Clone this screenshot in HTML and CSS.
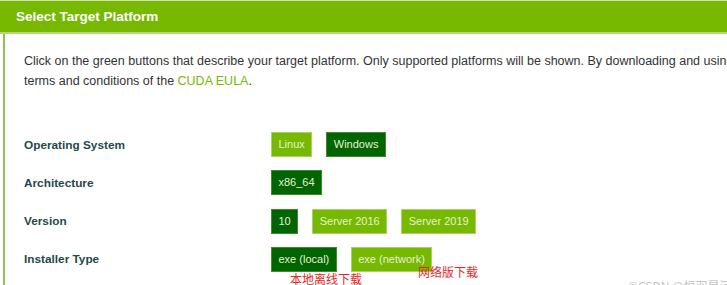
FILE: index.html
```html
<!DOCTYPE html>
<html>
<head>
<meta charset="utf-8">
<link rel="stylesheet" href="styles.css">
</head>
<body>
<div class="page">
  <div class="header">Select Target Platform</div>
  <div class="panel">
    <p class="intro">Click on the green buttons that describe your target platform. Only supported platforms will be shown. By downloading and using the software, you agree to fully comply with the<br>terms and conditions of the <a class="eula" href="#">CUDA EULA</a>.</p>
    <div class="rows">
      <div class="row">
        <div class="label">Operating System</div>
        <div class="btns">
          <span class="btn">Linux</span>
          <span class="btn on">Windows</span>
        </div>
      </div>
      <div class="row">
        <div class="label">Architecture</div>
        <div class="btns">
          <span class="btn on">x86_64</span>
        </div>
      </div>
      <div class="row">
        <div class="label">Version</div>
        <div class="btns">
          <span class="btn on">10</span>
          <span class="btn">Server 2016</span>
          <span class="btn">Server 2019</span>
        </div>
      </div>
      <div class="row">
        <div class="label">Installer Type</div>
        <div class="btns">
          <span class="btn on">exe (local)</span>
          <span class="btn">exe (network)</span>
        </div>
      </div>
    </div>
  </div>
  <div class="note note-local">本地离线下载</div>
  <div class="note note-net">网络版下载</div>
  <div class="mark">©CSDN @恒羽星河</div>
</div>
</body>
</html>
```
FILE: styles.css
```css
html, body {
  margin: 0;
  padding: 0;
  background: #fff;
}
body {
  width: 727px;
  height: 285px;
  overflow: hidden;
  font-family: "Liberation Sans", Arial, sans-serif;
}
.page {
  position: relative;
  width: 727px;
  height: 285px;
  overflow: hidden;
}
.header {
  height: 31px;
  line-height: 31px;
  background: #76b900;
  border-top: 1px solid #cfe0b4;
  border-bottom: 2px solid #b4d77c;
  color: #fff;
  font-weight: bold;
  font-size: 13.5px;
  padding-left: 16px;
}
.panel {
  margin-left: 3px;
  border-left: 2px solid #8fc24d;
  padding: 17px 0 20px 19px;
  height: 300px;
}
.intro {
  margin: 0;
  white-space: nowrap;
  font-size: 12.5px;
  line-height: 20px;
  color: #333;
}
.eula {
  color: #76b900;
  text-decoration: none;
}
.rows {
  margin-top: 41px;
  display: flex;
  flex-direction: column;
  gap: 13.3px;
}
.row {
  display: flex;
  align-items: center;
  height: 25px;
}
.label {
  width: 247px;
  font-weight: bold;
  font-size: 11.8px;
  color: #24494a;
}
.btns {
  display: flex;
  gap: 14px;
}
.btn {
  display: block;
  height: 23px;
  line-height: 23px;
  padding: 0 6.5px;
  background: #76b900;
  border: 1px solid #a6d266;
  color: #e4f2d2;
  font-size: 11px;
}
.btn.on {
  background: #006400;
  border-color: #3f8a2c;
}
.note {
  position: absolute;
  color: #e8262a;
  font-size: 12px;
  font-family: "Noto Sans CJK SC", sans-serif;
  line-height: 14px;
}
.note-local { left: 290px; top: 272px; }
.note-net { left: 418px; top: 265px; }
.mark {
  position: absolute;
  left: 628px;
  top: 279px;
  font-size: 12px;
  line-height: 14px;
  color: #c4c4c4;
  font-family: "Noto Sans CJK SC", sans-serif;
  white-space: nowrap;
}
```
